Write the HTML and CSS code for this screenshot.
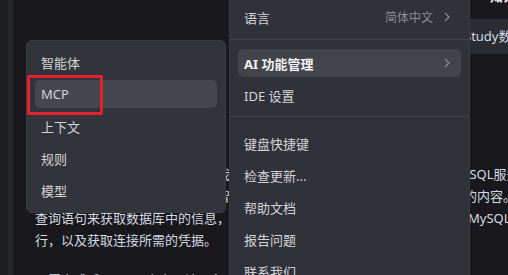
FILE: index.html
```html
<!DOCTYPE html>
<html lang="zh-CN">
<head>
  <meta charset="UTF-8" />
  <meta name="viewport" content="width=device-width, initial-scale=1.0" />
  <title>设置菜单</title>
  <link rel="stylesheet" href="styles.css">
</head>
<body>
  <div class="app">
    <aside class="rail"></aside>
    <main class="doc">
      <div class="doc-head">知识库</div>
      <div class="doc-band">请先在本地电脑上安装并启动名为Study数据库</div>
      <div class="para">
        <div class="line">借助智能体与模型上下文协议，我们可以让编辑器直接连接到本地运行的MySQL服务器</div>
        <div class="line">该服务器提供了一组工具，帮助智能体读取表结构、执行查询并返回结果中的内容。</div>
        <div class="line">查询语句来获取数据库中的信息，例如列出全部数据表、查看字段并统计各<span class="tail">MySQL</span>表的</div>
        <div class="line">行，以及获取连接所需的凭据。</div>
      </div>
      <div class="para para-next">
        <div class="line">配置完成后 cursor 中启用该服务即可。</div>
      </div>
    </main>
  </div>

  <!-- main settings menu -->
  <div class="menu main-menu">
    <div class="item">
      <span class="label">语言</span>
      <span class="value">简体中文</span>
      <svg class="chev" width="10" height="10" viewBox="0 0 10 10"><path d="M3 1 L7 5 L3 9" /></svg>
    </div>
    <div class="sep"></div>
    <div class="item active">
      <span class="label bold">AI 功能管理</span>
      <svg class="chev" width="10" height="10" viewBox="0 0 10 10"><path d="M3 1 L7 5 L3 9" /></svg>
    </div>
    <div class="item"><span class="label">IDE 设置</span></div>
    <div class="sep sep-wide"></div>
    <div class="item"><span class="label">键盘快捷键</span></div>
    <div class="item"><span class="label">检查更新...</span></div>
    <div class="item"><span class="label">帮助文档</span></div>
    <div class="item"><span class="label">报告问题</span></div>
    <div class="item"><span class="label">联系我们</span></div>
    <div class="item"><span class="label">关于</span></div>
  </div>

  <!-- AI submenu -->
  <div class="menu sub-menu">
    <div class="item"><span class="label">智能体</span></div>
    <div class="item active"><span class="label">MCP</span></div>
    <div class="item"><span class="label">上下文</span></div>
    <div class="item"><span class="label">规则</span></div>
    <div class="item"><span class="label">模型</span></div>
  </div>

  <div class="mark"></div>
</body>
</html>
```

FILE: styles.css
```css
body {
  margin: 0;
  background-color: #18181c;
  font-family: "Noto Sans", "Noto Sans CJK SC", sans-serif;
  font-size: 13px;
  overflow: hidden;
  height: 275px;
}

.app {
  display: flex;
  height: 100%;
}

.rail {
  width: 8px;
  background-color: #1e1f23;
  border-right: 5px solid #25262a;
}

.doc {
  flex: 1;
  padding-left: 22px;
  overflow: hidden;
  background-color: #19191d;
}

.doc-head {
  margin-top: -15px;
  margin-left: 455px;
  line-height: 22px;
  white-space: nowrap;
  color: #ececec;
  font-weight: 600;
}

.doc-band {
  margin-top: 12px;
  margin-left: 220px;
  padding-left: 14px;
  height: 35px;
  line-height: 35px;
  white-space: nowrap;
  background-color: #2b2c32;
  color: #d3dbe8;
}

.para {
  margin-top: 109px;
  color: #d4d9e2;
}

.para-next {
  margin-top: 18px;
}

.line {
  line-height: 22px;
  white-space: nowrap;
}

.tail {
  margin-left: 4px;
}

/* menus */
.menu {
  position: absolute;
  box-sizing: border-box;
  display: flex;
  flex-direction: column;
  background-color: #303239;
  color: #d4d4d6;
}

.main-menu {
  left: 229px;
  top: -6px;
  width: 241px;
  padding: 7px 8px 0;
  border-left: 1px solid #393b42;
  border-right: 1px solid #393b42;
}

.sub-menu {
  left: 26px;
  top: 40px;
  width: 200px;
  padding: 5px 8px 6px;
  background-color: #32343b;
  border: 1px solid #3b3d45;
  border-radius: 6px;
}

.item {
  display: flex;
  align-items: center;
  height: 28px;
  margin: 2px 0;
  padding: 0 9px 0 6px;
  border-radius: 5px;
}

.item.active {
  background-color: #42444c;
}

.sub-menu .item.active {
  background-color: #45474f;
}

.label {
  flex: 1;
  white-space: nowrap;
}

.bold {
  font-weight: 700;
  color: #f2f2f2;
}

.value {
  font-size: 12px;
  color: #8b8d94;
  margin-right: 9px;
}

.chev {
  fill: none;
  stroke: #85878e;
  stroke-width: 1.4;
}

.sep {
  height: 1px;
  margin: 6px -8px 7px;
  background-color: #41434a;
}

.sep-wide {
  margin: 5px -8px 10px;
}

/* red highlight box drawn over the MCP item */
.mark {
  position: absolute;
  left: 27px;
  top: 75px;
  width: 76px;
  height: 40px;
  box-sizing: border-box;
  border: 3px solid #e5222b;
  border-radius: 2px;
}
```
